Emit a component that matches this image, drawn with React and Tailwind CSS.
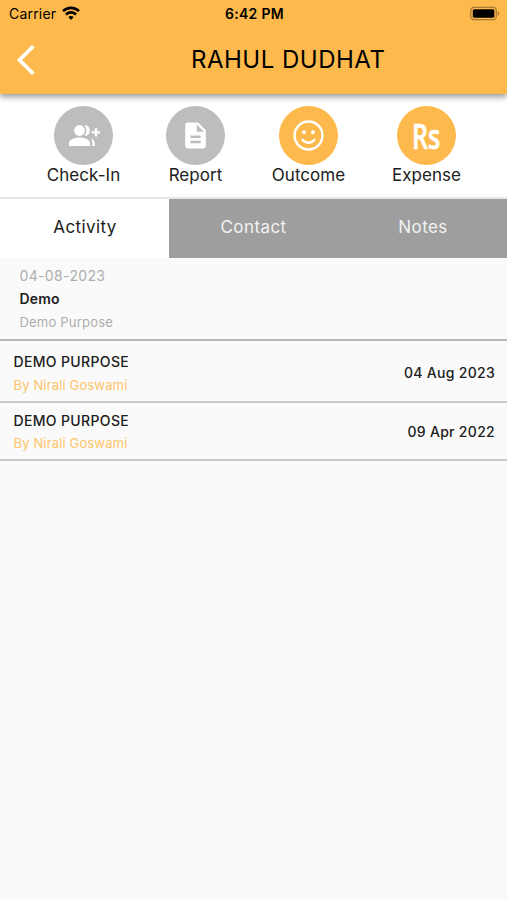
import { MdDescription } from 'react-icons/md';

const actions = [
    { label: 'Check-In', color: 'bg-[#bdbdbd]', position: 'ml-[41px] w-[85px]', icon: <GroupAddIcon /> },
    { label: 'Report', color: 'bg-[#bdbdbd]', position: 'ml-[27px] w-[85px]', icon: <MdDescription className="size-[31px] text-white" /> },
    { label: 'Outcome', color: 'bg-[#fdb94b]', position: 'ml-[28px] w-[85px]', icon: <SmileIcon /> },
    { label: 'Expense', color: 'bg-[#fdb94b]', position: 'ml-[33px] w-[85px]', icon: <RupeeIcon /> },
];

const activities = [
    { title: 'DEMO PURPOSE', author: 'By Nirali Goswami', date: '04 Aug 2023', row: 'h-[62px] pt-[2px]', text: 'pt-[3px]' },
    { title: 'DEMO PURPOSE', author: 'By Nirali Goswami', date: '09 Apr 2022', row: 'h-[58px]', text: 'pt-[2px]' },
];

function GroupAddIcon() {
    return (
        <svg viewBox="0 0 32 24" className="h-6 w-8" fill="white">
            <circle cx="11.5" cy="6.5" r="5.4" />
            <path d="M1 22v-2.700c0-3.600 5-5.800 10.500-5.800s10.500 2.200 10.500 5.800v2.700z" />
            <path d="M16.500 1.300c3.200-.6 5.300 2.100 5.300 5.200s-2.100 5.800-5.300 5.200c2.500-3 2.500-7.400 0-10.400z" />
            <path d="M22.800 14.300c2.500 1 4 2.800 4 5v2.700h-2.600v-2.700c0-2-.3-3.500-1.400-5z" />
            <path d="M26.800 4.200h2.400v3h3v2.400h-3v3h-2.400v-3h-3v-2.400h3z" />
        </svg>
    );
}

function SmileIcon() {
    return (
        <svg viewBox="0 0 32 32" className="size-[31px]" fill="none" stroke="white" strokeLinecap="round">
            <circle cx="16" cy="16" r="14.400" strokeWidth="2.500" />
            <path d="M10 20.600c3.200 3.700 8.800 3.700 12 0" strokeWidth="2.600" />
            <circle cx="11.400" cy="12.600" r="2" fill="white" stroke="none" />
            <circle cx="20.600" cy="12.600" r="2" fill="white" stroke="none" />
        </svg>
    );
}

function RupeeIcon() {
    return (
        <span className="scale-x-[0.740] font-['Open_Sans',sans-serif] text-[34px] leading-[48px] font-semibold text-white [-webkit-text-stroke:0.700px_white]">
            Rs
        </span>
    );
}

function WifiIcon() {
    return (
        <svg viewBox="0 0 18 14" className="ml-[6px] h-[14px] w-[18px] -translate-y-px" fill="none" stroke="black" strokeWidth="2.600">
            <path d="M1 5.200C5.500.7 12.500.7 17 5.200" />
            <path d="M3.900 8.500c2.900-2.800 7.300-2.800 10.200 0" />
            <path d="M9 14l-2.700-2.900c1.400-1.400 4-1.400 5.400 0z" fill="black" stroke="none" />
        </svg>
    );
}

function BatteryIcon() {
    return (
        <svg viewBox="0 0 30 14" className="h-[14px] w-[30px] -translate-y-[0.500px]">
            <rect x=".75" y=".75" width="25.500" height="12.500" rx="3.500" fill="none" stroke="#a87c35" strokeWidth="1.300" />
            <rect x="2.800" y="2.800" width="21.500" height="8.500" rx="1.500" fill="black" />
            <path d="M27.600 4.700c2 .8 2 3.800 0 4.600z" fill="#a87c35" />
        </svg>
    );
}

export default function App() {
    return (
        <div className="flex h-[900px] w-[507px] flex-col overflow-hidden bg-[#fafafa] font-['Inter',sans-serif] text-[#202020]">
            <header className="z-10 h-[94px] shrink-0 bg-[#fdb94b] text-black shadow-[0_3px_6px_rgba(0,0,0,0.4)]">
                <div className="grid h-[27px] grid-cols-3 items-center pl-[9px] pr-[7px]">
                    <div className="flex items-center text-[14px] tracking-[0.200px]">
                        <span>Carrier</span>
                        <WifiIcon />
                    </div>
                    <span className="text-center text-[14px] font-semibold tracking-[0.300px]">6:42 PM</span>
                    <div className="flex justify-end">
                        <BatteryIcon />
                    </div>
                </div>
                <div className="flex h-[66px] items-center">
                    <button className="ml-[16px] w-[20px]" aria-label="Back">
                        <svg viewBox="0 0 20 32" className="h-8 w-5" fill="none" stroke="white" strokeWidth="3.700">
                            <path d="M17.300 2.200L3.500 16l13.800 13.800" />
                        </svg>
                    </button>
                    <h1 className="ml-[155px] whitespace-nowrap text-[24px] tracking-[0.5px]">RAHUL DUDHAT</h1>
                </div>
            </header>

            <section className="flex h-[105px] shrink-0 border-b-2 border-[#e6e6e6] bg-white pt-[12px]">
                {actions.map((action) => (
                    <div key={action.label} className={`flex shrink-0 flex-col items-center ${action.position}`}>
                        <div className={`flex size-[59px] shrink-0 items-center justify-center rounded-full ${action.color}`}>
                            {action.icon}
                        </div>
                        <span className="whitespace-nowrap text-[17px] leading-[20px] tracking-[0.050px]">{action.label}</span>
                    </div>
                ))}
            </section>

            <nav className="grid h-[59px] shrink-0 grid-cols-3 text-[17px] tracking-[0.400px]">
                <button className="bg-white pb-px pl-px">Activity</button>
                <button className="bg-[#9e9e9e] pb-px text-[#f2f2f2]">Contact</button>
                <button className="bg-[#9e9e9e] pb-px pl-px text-[#f2f2f2]">Notes</button>
            </nav>

            <section className="h-[83px] shrink-0 border-b-2 border-[#b8b8b8] pl-[19.500px] pt-[6px] leading-[23.400px]">
                <p className="text-[14px] tracking-[0.350px] text-[#adadad]">04-08-2023</p>
                <p className="text-[14px] font-semibold tracking-[0.200px]">Demo</p>
                <p className="text-[13px] tracking-[0.200px] text-[#adadad]">Demo Purpose</p>
            </section>

            {activities.map((activity) => (
                <div key={activity.date} className={`flex shrink-0 items-center justify-between border-b-2 border-[#c8c8c8] pl-[13.500px] pr-[12px] ${activity.row}`}>
                    <div className={`leading-[23.500px] ${activity.text}`}>
                        <p className="text-[14px] font-medium tracking-[0.350px]">{activity.title}</p>
                        <p className="text-[13px] tracking-[0.150px] text-[#fdc469]">{activity.author}</p>
                    </div>
                    <span className="text-[14px] font-medium tracking-[0.300px]">{activity.date}</span>
                </div>
            ))}
        </div>
    );
}
